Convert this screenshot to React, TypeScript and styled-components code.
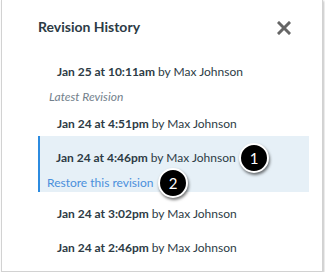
import React, { FC } from "react";
import styled, { createGlobalStyle } from "styled-components";

const GlobalStyle = createGlobalStyle`
  body {
    margin: 0;
    background: #ffffff;
    font-family: Lato, "Open Sans", sans-serif;
  }
`;

const Card = styled.div`
  box-sizing: border-box;
  margin-left: 1px;
  width: 322px;
  height: 272px;
  background: #ffffff;
  border: 1px solid #d2d2d2;
  border-top: none;
  box-shadow: 1px 1px 2px rgba(0, 0, 0, 0.25);
  padding: 18px 31px 0 36px;
  color: #2d3b45;
`;

const Header = styled.div`
  display: flex;
  align-items: center;
  justify-content: space-between;
  height: 18px;
`;

const Title = styled.h2`
  margin: 0;
  font-size: 14px;
  line-height: 18px;
  font-weight: 700;
  color: #2d3b45;
`;

const Close = styled.button`
  display: flex;
  padding: 0;
  border: none;
  background: none;
  cursor: pointer;
  margin-top: 1px;
`;

const List = styled.ul`
  list-style: none;
  margin: 18px 0 0;
  padding: 0;
  width: 271px;
`;

const Row = styled.li`
  display: flex;
  align-items: center;
  height: 34px;
  padding-left: 19px;
  font-size: 12px;
  white-space: nowrap;
`;

const When = styled.span`
  font-weight: 700;
  margin-right: 3px;
`;

const Label = styled.li`
  padding-left: 11px;
  font-size: 12px;
  line-height: 18px;
  font-style: italic;
  color: #73818c;
`;

const Selected = styled.li`
  position: relative;
  margin: -4px 0 4px;
  padding-top: 4px;
  background: #e6f0f7;
  border-left: 2px solid #2c8be0;
`;

const SelectedRow = styled.div`
  display: flex;
  align-items: center;
  height: 34px;
  padding-left: 16px;
  font-size: 12px;
  white-space: nowrap;
`;

const Restore = styled.div`
  padding-left: 7px;
  font-size: 12px;
  line-height: 18px;
  color: #4a8fdc;
`;

const Badge = styled.span<{ $left: number; $top: number }>`
  position: absolute;
  left: ${(p) => p.$left}px;
  top: ${(p) => p.$top}px;
  width: 26px;
  height: 26px;
  border-radius: 50%;
  border: 2px solid #ffffff;
  background: #000000;
  color: #ffffff;
  font-size: 15px;
  display: flex;
  align-items: center;
  justify-content: center;
  box-shadow: 1px 2px 3px rgba(0, 0, 0, 0.55);
`;

const revisions = [
  { date: "Jan 25 at 10:11am", author: "Max Johnson" },
  { date: "Jan 24 at 4:51pm", author: "Max Johnson" },
  { date: "Jan 24 at 4:46pm", author: "Max Johnson", selected: true },
  { date: "Jan 24 at 3:02pm", author: "Max Johnson" },
  { date: "Jan 24 at 2:46pm", author: "Max Johnson" },
];

const App: FC = () => {
  return (
    <>
      <GlobalStyle />
      <Card>
        <Header>
          <Title>Revision History</Title>
          <Close aria-label="Close">
            <svg width="14" height="14" viewBox="0 0 14 14">
              <path
                d="M2 2 L12 12 M12 2 L2 12"
                stroke="#666666"
                strokeWidth="3"
                strokeLinecap="square"
              />
            </svg>
          </Close>
        </Header>
        <List>
          {revisions.map((r, i) => (
            <React.Fragment key={r.date}>
              {r.selected ? (
                <Selected>
                  <SelectedRow>
                    <When>{r.date}</When>by {r.author}
                  </SelectedRow>
                  <Restore>Restore this revision</Restore>
                  <Badge $left={199} $top={7}>1</Badge>
                  <Badge $left={118} $top={32}>2</Badge>
                </Selected>
              ) : (
                <Row>
                  <When>{r.date}</When>by {r.author}
                </Row>
              )}
              {i === 0 && <Label>Latest Revision</Label>}
            </React.Fragment>
          ))}
        </List>
      </Card>
    </>
  );
};

export default App;
